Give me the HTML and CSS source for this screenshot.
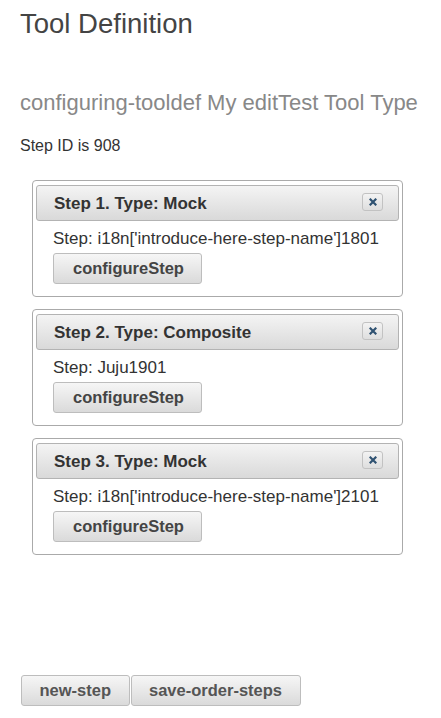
FILE: index.html
```html
<!DOCTYPE html>
<html>
<head>
<meta charset="utf-8">
<title>Tool Definition</title>
<link rel="stylesheet" href="styles.css">
</head>
<body>
<h1 class="title">Tool Definition</h1>
<h2 class="subtitle">configuring-tooldef My editTest Tool Type</h2>
<p class="step-id">Step ID is 908</p>

<div class="steps">
  <div class="card">
    <div class="card-head">
      <span class="card-title">Step 1. Type: Mock</span>
      <button class="close" title="close"><svg width="8" height="8" viewBox="0 0 8 8"><path d="M1.5 1.5L6.5 6.5M6.5 1.5L1.5 6.5" stroke="#2f5272" stroke-width="2.2" stroke-linecap="square"/></svg></button>
    </div>
    <div class="card-body">
      <div class="step-name">Step: i18n['introduce-here-step-name']1801</div>
      <button class="btn btn-config">configureStep</button>
    </div>
  </div>

  <div class="card">
    <div class="card-head">
      <span class="card-title">Step 2. Type: Composite</span>
      <button class="close" title="close"><svg width="8" height="8" viewBox="0 0 8 8"><path d="M1.5 1.5L6.5 6.5M6.5 1.5L1.5 6.5" stroke="#2f5272" stroke-width="2.2" stroke-linecap="square"/></svg></button>
    </div>
    <div class="card-body">
      <div class="step-name">Step: Juju1901</div>
      <button class="btn btn-config">configureStep</button>
    </div>
  </div>

  <div class="card">
    <div class="card-head">
      <span class="card-title">Step 3. Type: Mock</span>
      <button class="close" title="close"><svg width="8" height="8" viewBox="0 0 8 8"><path d="M1.5 1.5L6.5 6.5M6.5 1.5L1.5 6.5" stroke="#2f5272" stroke-width="2.2" stroke-linecap="square"/></svg></button>
    </div>
    <div class="card-body">
      <div class="step-name">Step: i18n['introduce-here-step-name']2101</div>
      <button class="btn btn-config">configureStep</button>
    </div>
  </div>
</div>

<div class="actions">
  <button class="btn btn-action">new-step</button>
  <button class="btn btn-action">save-order-steps</button>
</div>
</body>
</html>
```
FILE: styles.css
```css
html, body {
  margin: 0;
  padding: 0;
  background: #fff;
}
body {
  padding: 0 20px;
  font-family: "Liberation Sans", Arial, sans-serif;
  color: #333;
}
.title {
  margin: 8px 0 0 0;
  font-size: 27.5px;
  line-height: 32px;
  font-weight: normal;
  color: #444;
}
.subtitle {
  margin: 50px 0 0 0;
  font-size: 22px;
  line-height: 25px;
  font-weight: normal;
  color: #888;
}
.step-id {
  margin: 22px 0 0 0;
  font-size: 16px;
  line-height: 18px;
  color: #333;
}
.steps {
  margin: 25px 0 0 12px;
  display: flex;
  flex-direction: column;
  gap: 12px;
}
.card {
  box-sizing: border-box;
  width: 371px;
  border: 1px solid #aaa;
  border-radius: 4px;
  padding: 4px 3px 0 3px;
  background: #fff;
}
.card-head {
  box-sizing: border-box;
  height: 36px;
  display: flex;
  align-items: center;
  justify-content: space-between;
  padding: 0 15px 0 17px;
  border: 1px solid #b3b3b3;
  border-radius: 3px;
  background: linear-gradient(#f4f4f4, #d9d9d9);
}
.card-title {
  font-size: 17px;
  font-weight: bold;
  color: #333;
  line-height: 19px;
}
.close {
  box-sizing: border-box;
  width: 21px;
  height: 18px;
  margin-top: -3px;
  padding: 0;
  display: flex;
  align-items: center;
  justify-content: center;
  border: 1px solid #c2c2c2;
  border-radius: 3px;
  background: linear-gradient(#f3f3f3, #dedede);
}
.close svg {
  display: block;
}
.card-body {
  padding: 9px 0 12px 17px;
  display: flex;
  flex-direction: column;
  align-items: flex-start;
}
.step-name {
  font-size: 17px;
  line-height: 18px;
  color: #333;
}
.btn {
  box-sizing: border-box;
  height: 31px;
  font-family: "Liberation Sans", Arial, sans-serif;
  font-size: 16.5px;
  font-weight: bold;
  line-height: 19px;
  border: 1px solid #bdbdbd;
  border-radius: 3px;
  background: linear-gradient(#f6f6f6, #dadada);
  cursor: pointer;
}
.btn-config {
  margin-top: 5px;
  width: 149px;
  padding: 0 19px;
  color: #444;
}
.actions {
  margin: 120px 0 0 1px;
  display: flex;
  gap: 1px;
}
.btn-action {
  padding: 0 17.5px;
  color: #555;
}
```
